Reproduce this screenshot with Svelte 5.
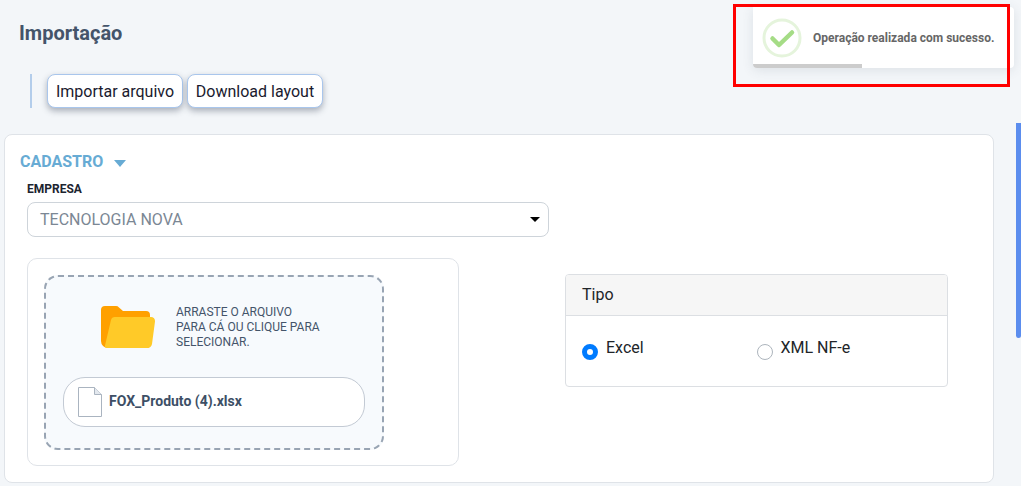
<script>
	let tipo = 'excel';
	const fileName = 'FOX_Produto (4).xlsx';
</script>

<div class="page">
	<h1>Importação</h1>

	<div class="toolbar">
		<button>Importar arquivo</button>
		<button>Download layout</button>
	</div>

	<section class="card">
		<div class="section-title">
			CADASTRO
			<span class="caret"></span>
		</div>

		<div class="field">
			<span class="label">EMPRESA</span>
			<div class="select">
				<span>TECNOLOGIA NOVA</span>
				<span class="select-arrow"></span>
			</div>
		</div>

		<div class="columns">
			<div class="upload-box">
				<div class="dropzone">
					<div class="drop-hint">
						<svg width="56" height="44" viewBox="0 0 56 44">
							<path d="M1 5a4 4 0 0 1 4-4h11a4 4 0 0 1 3 1.4L23 6h23a4 4 0 0 1 4 4v30a3 3 0 0 1-3 3H8a7 7 0 0 1-7-7z" fill="#ffa000" />
							<path d="M11 15a4 4 0 0 1 4-3h36a4 4 0 0 1 4 4.500L52 39a5 5 0 0 1-5 4H7a2 2 0 0 1-2-2.500z" fill="#ffca28" />
						</svg>
						<p>ARRASTE O ARQUIVO<br />PARA CÁ OU CLIQUE PARA<br />SELECIONAR.</p>
					</div>
					<div class="file-pill">
						<svg width="26" height="32" viewBox="0 0 26 32" fill="none" stroke="#aab4c0" stroke-width="1">
							<path d="M.500 1.500h16l7 7v22h-23z" />
							<path d="M16.500 1.500v7h7" fill="#e3e8ee" />
						</svg>
						<strong>{fileName}</strong>
					</div>
				</div>
			</div>

			<div class="tipo">
				<div class="tipo-head">Tipo</div>
				<div class="tipo-body">
					<label class="radio">
						<input type="radio" bind:group={tipo} value="excel" />
						<span>Excel</span>
					</label>
					<label class="radio">
						<input type="radio" bind:group={tipo} value="xml" />
						<span>XML NF-e</span>
					</label>
				</div>
			</div>
		</div>
	</section>

	<div class="scroll-track"><div class="scroll-thumb"></div></div>

	<div class="toast">
		<svg width="40" height="40" viewBox="0 0 40 40">
			<circle cx="20" cy="20" r="18" fill="#fff" stroke="#e5f4dc" stroke-width="3" />
			<path d="M10.500 20.500l6.500 6.500 13-12.500" fill="none" stroke="#a5dc86" stroke-width="4.500" stroke-linecap="round" stroke-linejoin="round" />
		</svg>
		<span>Operação realizada com sucesso.</span>
		<div class="progress"></div>
	</div>
	<div class="highlight"></div>
</div>

<style>
	:global(body) {
		margin: 0;
		background: #f3f6f9;
		overflow: hidden;
	}

	.page {
		position: relative;
		box-sizing: border-box;
		width: 1021px;
		height: 486px;
		padding: 21px 0 0 4px;
		font-family: Roboto, sans-serif;
		color: #212529;
		overflow: hidden;
	}

	h1 {
		margin: 0 0 0 15px;
		font-size: 20px;
		line-height: 24px;
		font-weight: 700;
		color: #44546a;
	}

	.toolbar {
		display: flex;
		gap: 4px;
		margin: 29px 0 26px 26px;
		padding-left: 15px;
		border-left: 2px solid #b3cdeb;
	}

	button {
		width: 136px;
		height: 34px;
		padding: 0;
		font-family: inherit;
		font-size: 16px;
		color: #1a1a2e;
		background: #fff;
		border: 1px solid #a9c6ec;
		border-radius: 8px;
		box-shadow: 0 3px 6px rgba(60, 70, 90, 0.4);
	}

	.card {
		box-sizing: border-box;
		width: 990px;
		height: 349px;
		padding: 17px 15px 0;
		background: #fff;
		border: 1px solid #dfe3e8;
		border-radius: 8px;
	}

	.section-title {
		display: flex;
		align-items: center;
		gap: 11px;
		font-size: 16px;
		line-height: 20px;
		font-weight: 700;
		color: #67abd4;
	}

	.caret {
		width: 0;
		height: 0;
		margin-top: 2px;
		border: 6px solid transparent;
		border-top: 7px solid #67abd4;
		border-bottom: 0;
	}

	.field {
		margin: 0 0 0 7px;
	}

	.label {
		display: block;
		margin-top: 9px;
		font-size: 12px;
		line-height: 16px;
		font-weight: 700;
		color: #1c2430;
	}

	.select {
		box-sizing: border-box;
		display: flex;
		align-items: center;
		justify-content: space-between;
		width: 522px;
		height: 35px;
		margin-top: 5px;
		padding: 0 12px;
		font-size: 16px;
		color: #7b8794;
		border: 1px solid #ced4da;
		border-radius: 8px;
	}

	.select-arrow {
		width: 0;
		height: 0;
		margin-right: -4px;
		border: 5.500px solid transparent;
		border-top: 5.500px solid #000;
		border-bottom: 0;
	}

	.columns {
		display: flex;
		align-items: flex-start;
		margin: 21px 0 0 7px;
	}

	.upload-box {
		box-sizing: border-box;
		width: 432px;
		height: 208px;
		padding: 16px;
		border: 1px solid #dfe3e8;
		border-radius: 10px;
	}

	.dropzone {
		box-sizing: border-box;
		width: 340px;
		height: 175px;
		padding: 26px 17px 0;
		background: #f7fafd;
		border: 2px dashed #98a4b3;
		border-radius: 14px;
	}

	.drop-hint {
		display: flex;
		align-items: center;
		gap: 20px;
		height: 48px;
		padding-left: 37px;
	}

	.drop-hint p {
		margin: 0;
		font-size: 12px;
		line-height: 15px;
		color: #44546a;
	}

	.file-pill {
		box-sizing: border-box;
		display: flex;
		align-items: center;
		gap: 5px;
		width: 302px;
		height: 50px;
		margin: 26px 0 0 0;
		padding: 0 14px;
		background: #fff;
		border: 1px solid #c3cad4;
		border-radius: 22px;
	}

	.file-pill strong {
		padding-bottom: 2px;
		font-size: 14px;
		font-weight: 700;
		color: #3d4f66;
	}

	.tipo {
		box-sizing: border-box;
		width: 383px;
		height: 113px;
		margin: 16px 0 0 106px;
		border: 1px solid #dcdfe3;
		border-radius: 4px;
	}

	.tipo-head {
		box-sizing: border-box;
		height: 41px;
		padding: 0 16px;
		font-size: 16px;
		line-height: 40px;
		color: #212529;
		background: #f6f6f6;
		border-bottom: 1px solid #dcdfe3;
		border-radius: 3px 3px 0 0;
	}

	.tipo-body {
		display: flex;
		padding: 22px 16px 0;
	}

	.radio {
		display: flex;
		width: 175px;
		gap: 8px;
		font-size: 16px;
		line-height: 20px;
	}

	.radio input {
		appearance: none;
		box-sizing: border-box;
		width: 16px;
		height: 16px;
		margin: 6px 0 0 0;
		background: #fff;
		border: 1px solid #adb5bd;
		border-radius: 50%;
	}

	.radio input:checked {
		border: 5px solid #007bff;
	}

	.scroll-track {
		position: absolute;
		top: 0;
		right: 0;
		width: 7px;
		height: 486px;
		background: #f3f6f9;
	}

	.scroll-thumb {
		position: absolute;
		top: 123px;
		right: 0;
		width: 5px;
		height: 215px;
		background: #5b8dee;
		border-radius: 0 0 3px 3px;
	}

	.highlight {
		position: absolute;
		top: 4px;
		left: 733px;
		box-sizing: border-box;
		width: 277px;
		height: 83px;
		border: 3px solid #ff0000;
	}

	.toast {
		position: absolute;
		top: 7px;
		left: 753px;
		box-sizing: border-box;
		display: flex;
		align-items: center;
		gap: 11px;
		width: 261px;
		height: 61px;
		padding: 1px 0 0 9px;
		background: #fff;
		border-radius: 0 4px 4px 4px;
		box-shadow: 0 2px 12px rgba(60, 70, 90, 0.12);
		overflow: hidden;
	}

	.toast span {
		font-size: 12px;
		font-weight: 700;
		color: #666;
		white-space: nowrap;
	}

	.progress {
		position: absolute;
		left: 0;
		bottom: 0;
		width: 109px;
		height: 4px;
		background: #cccccc;
	}
</style>
